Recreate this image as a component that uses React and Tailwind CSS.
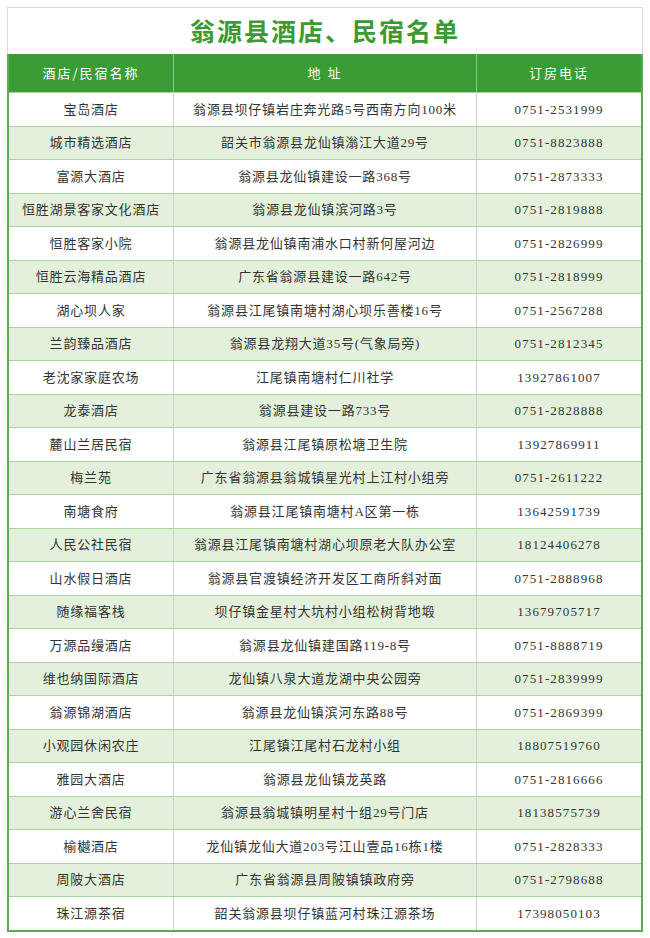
const rows = [
  ["宝岛酒店", "翁源县坝仔镇岩庄奔光路5号西南方向100米", "0751-2531999"],
  ["城市精选酒店", "韶关市翁源县龙仙镇滃江大道29号", "0751-8823888"],
  ["富源大酒店", "翁源县龙仙镇建设一路368号", "0751-2873333"],
  ["恒胜湖景客家文化酒店", "翁源县龙仙镇滨河路3号", "0751-2819888"],
  ["恒胜客家小院", "翁源县龙仙镇南浦水口村新何屋河边", "0751-2826999"],
  ["恒胜云海精品酒店", "广东省翁源县建设一路642号", "0751-2818999"],
  ["湖心坝人家", "翁源县江尾镇南塘村湖心坝乐善楼16号", "0751-2567288"],
  ["兰韵臻品酒店", "翁源县龙翔大道35号(气象局旁)", "0751-2812345"],
  ["老沈家家庭农场", "江尾镇南塘村仁川社学", "13927861007"],
  ["龙泰酒店", "翁源县建设一路733号", "0751-2828888"],
  ["麓山兰居民宿", "翁源县江尾镇原松塘卫生院", "13927869911"],
  ["梅兰苑", "广东省翁源县翁城镇星光村上江村小组旁", "0751-2611222"],
  ["南塘食府", "翁源县江尾镇南塘村A区第一栋", "13642591739"],
  ["人民公社民宿", "翁源县江尾镇南塘村湖心坝原老大队办公室", "18124406278"],
  ["山水假日酒店", "翁源县官渡镇经济开发区工商所斜对面", "0751-2888968"],
  ["随缘福客栈", "坝仔镇金星村大坑村小组松树背地塅", "13679705717"],
  ["万源品缦酒店", "翁源县龙仙镇建国路119-8号", "0751-8888719"],
  ["维也纳国际酒店", "龙仙镇八泉大道龙湖中央公园旁", "0751-2839999"],
  ["翁源锦湖酒店", "翁源县龙仙镇滨河东路88号", "0751-2869399"],
  ["小观园休闲农庄", "江尾镇江尾村石龙村小组", "18807519760"],
  ["雅园大酒店", "翁源县龙仙镇龙英路", "0751-2816666"],
  ["游心兰舍民宿", "翁源县翁城镇明星村十组29号门店", "18138575739"],
  ["榆樾酒店", "龙仙镇龙仙大道203号江山壹品16栋1楼", "0751-2828333"],
  ["周陂大酒店", "广东省翁源县周陂镇镇政府旁", "0751-2798688"],
  ["珠江源茶宿", "韶关翁源县坝仔镇蓝河村珠江源茶场", "17398050103"],
];

function App() {
  return (
    <div className="w-[650px] h-[938px] bg-white pt-[7px] px-[7px] font-['Liberation_Serif','Noto_Sans_CJK_SC',serif]">
      <div className="h-[47px] border border-b-0 border-[#dcdcdc] flex items-center justify-center">
        <h1 className="text-[25px] font-bold tracking-[2px] text-[#3b9a33] font-['Noto_Sans_CJK_SC',serif]">
          翁源县酒店、民宿名单
        </h1>
      </div>
      <div className="border-2 border-t-0 border-[#5aac4e]">
        <div className="grid grid-cols-[165px_303px_1fr] h-[38px] bg-[#3a9c34] text-white text-[13px] tracking-[2px] font-['Noto_Sans_CJK_SC',sans-serif]">
          <div className="flex items-center justify-center border-r border-[#8cc884]">酒店/民宿名称</div>
          <div className="flex items-center justify-center border-r border-[#8cc884]">地 址</div>
          <div className="flex items-center justify-center">订房电话</div>
        </div>
        {rows.map((row, i) => (
          <div
            key={row[0]}
            className={
              "grid grid-cols-[165px_303px_1fr] h-[33.5px] text-[13px] tracking-[0.8px] text-[#333] border-t border-[#a9d59f] " +
              (i % 2 === 1 ? "bg-[#e3f1dc]" : "bg-white")
            }
          >
            <div className="flex items-center justify-center border-r border-[#cfcfcf] whitespace-nowrap">{row[0]}</div>
            <div className="flex items-center justify-center border-r border-[#cfcfcf] whitespace-nowrap">{row[1]}</div>
            <div className="flex items-center justify-center whitespace-nowrap tracking-[1.1px]">{row[2]}</div>
          </div>
        ))}
      </div>
    </div>
  );
}

export default App;
